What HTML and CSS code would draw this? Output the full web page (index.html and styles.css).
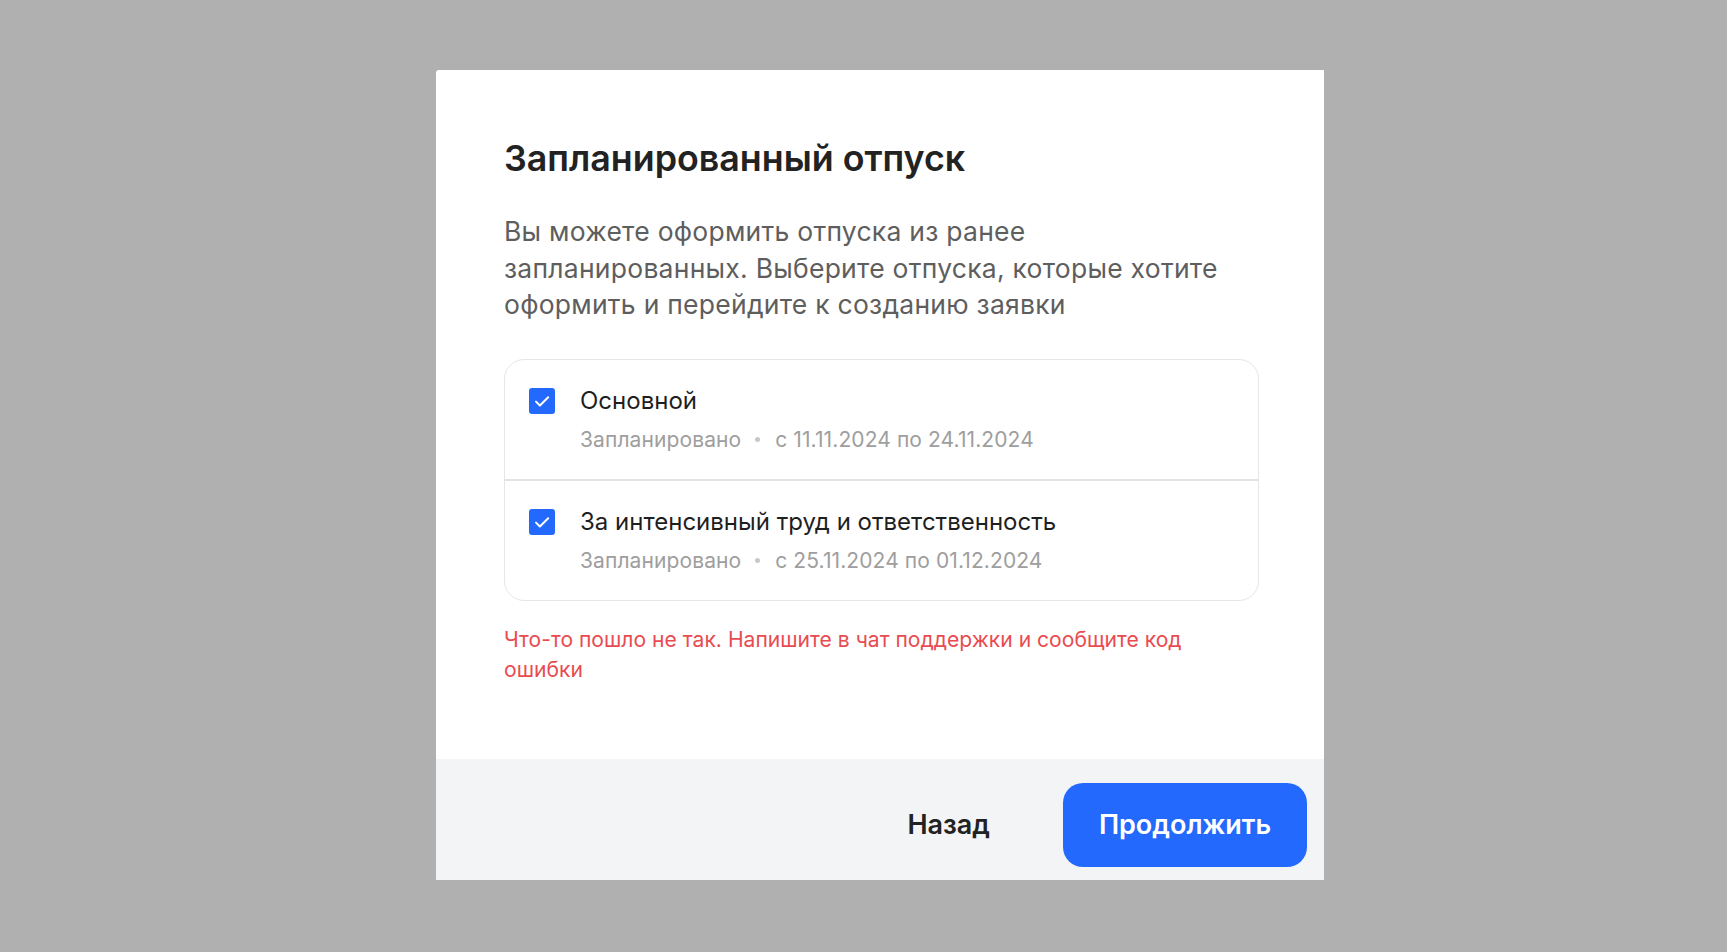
FILE: index.html
```html
<!DOCTYPE html>
<html lang="ru">
<head>
    <meta charset="UTF-8">
    <meta name="viewport" content="width=device-width, initial-scale=1.0">
    <title>Запланированный отпуск</title>
    <link rel="stylesheet" href="styles.css">
</head>
<body>
    <div class="modal">
        <div class="modal-body">
            <h2 class="modal-title">Запланированный отпуск</h2>
            <p class="modal-text">Вы можете оформить отпуска из ранее запланированных. Выберите отпуска, которые хотите оформить и перейдите к созданию заявки</p>

            <div class="vacations">
                <label class="vacation">
                    <span class="check">
                        <svg width="26" height="26" viewBox="0 0 26 26"><path d="M7 13.6l3.9 3.9L19.2 9.2" fill="none" stroke="#fff" stroke-width="2" stroke-linecap="round" stroke-linejoin="round"/></svg>
                    </span>
                    <span class="vacation-info">
                        <span class="vacation-name">Основной</span>
                        <span class="vacation-meta">Запланировано <i class="dot"></i> с 11.11.2024 по 24.11.2024</span>
                    </span>
                </label>
                <label class="vacation">
                    <span class="check">
                        <svg width="26" height="26" viewBox="0 0 26 26"><path d="M7 13.6l3.9 3.9L19.2 9.2" fill="none" stroke="#fff" stroke-width="2" stroke-linecap="round" stroke-linejoin="round"/></svg>
                    </span>
                    <span class="vacation-info">
                        <span class="vacation-name">За интенсивный труд и ответственность</span>
                        <span class="vacation-meta">Запланировано <i class="dot"></i> с 25.11.2024 по 01.12.2024</span>
                    </span>
                </label>
            </div>

            <p class="error">Что-то пошло не так. Напишите в чат поддержки и сообщите код ошибки</p>
        </div>

        <div class="modal-footer">
            <button class="btn-back">Назад</button>
            <button class="btn-primary">Продолжить</button>
        </div>
    </div>
</body>
</html>
```

FILE: styles.css
```css
body {
    margin: 0;
    min-height: 100vh;
    background-color: #b0b0b0;
    font-family: Inter, "Noto Sans", sans-serif;
    padding: 70px 0 0 436px;
    box-sizing: border-box;
}
.modal {
    width: 888px;
    background: #fff;
    border-radius: 3px 0 0 0;
    overflow: hidden;
}
.modal-body {
    padding: 65px 65px 74px 68px;
}
.modal-title {
    margin: 0;
    font-size: 35.8px;
    line-height: 46px;
    font-weight: 560;
    color: #222;
}
.modal-text {
    max-width: 735px;
    margin: 32px 0 0;
    font-size: 26.5px;
    line-height: 36.5px;
    color: #5e5e5e;
    letter-spacing: 0.25px;
}
.vacations {
    margin-top: 36px;
    border: 1px solid #e6e6e6;
    border-radius: 20px;
}
.vacation {
    display: flex;
    align-items: flex-start;
    gap: 25px;
    padding: 26px 24px 25px;
    cursor: pointer;
}
.vacation + .vacation {
    border-top: 2px solid #e3e3e3;
}
.check {
    flex: none;
    width: 26px;
    height: 26px;
    margin-top: 2px;
    border-radius: 3px;
    background: #2469fd;
    display: flex;
}
.vacation-info {
    display: flex;
    flex-direction: column;
    gap: 10px;
}
.vacation-name {
    font-size: 24px;
    line-height: 30px;
    color: #1f1f1f;
}
.vacation-meta {
    font-size: 21px;
    line-height: 28px;
    color: #9e9e9e;
    display: flex;
    align-items: center;
    gap: 0 5px;
    letter-spacing: 0.1px;
}
.dot {
    width: 5px;
    height: 5px;
    border-radius: 50%;
    background: #c8c8c8;
    margin: 0 10px 0 9px;
}
.error {
    max-width: 700px;
    margin: 24px 0 0;
    font-size: 21.1px;
    line-height: 30px;
    color: #e84c51;
}
.modal-footer {
    background: #f3f4f6;
    display: flex;
    justify-content: flex-end;
    align-items: center;
    padding: 24px 17px 13px;
}
.btn-back, .btn-primary {
    font-family: inherit;
    font-size: 27px;
    font-weight: 600;
    border: none;
    cursor: pointer;
}
.btn-back {
    background: none;
    color: #222;
    padding: 0;
    margin-right: 73px;
}
.btn-primary {
    background: #2469fd;
    color: #fff;
    width: 244px;
    height: 84px;
    border-radius: 20px;
}
.btn-primary:hover {
    background: #1d5be0;
}
```
